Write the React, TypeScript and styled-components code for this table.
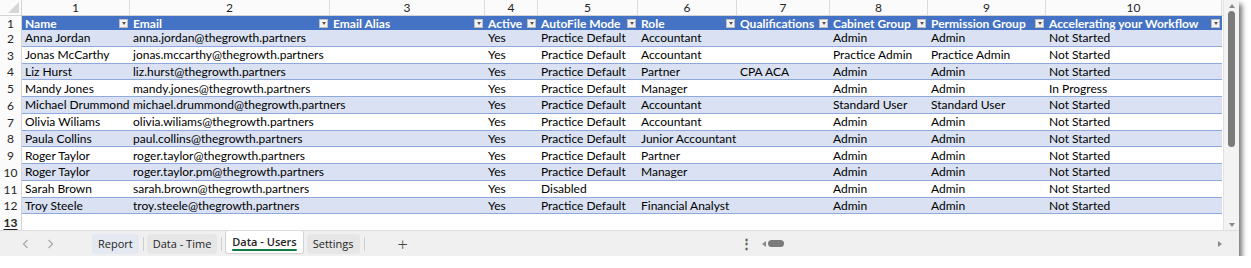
import React from 'react';
import styled, { createGlobalStyle } from 'styled-components';

const GlobalStyle = createGlobalStyle`
  html, body { margin: 0; padding: 0; background: #ffffff; }
  * { box-sizing: border-box; }
`;

const COLS = [108, 200, 155, 53, 100, 99, 93, 98, 118, 176];
const TEMPLATE = `22px ${COLS.map((c) => `${c}px`).join(' ')}`;
const ROW_H = 16.75;

const HEADERS = [
  'Name',
  'Email',
  'Email Alias',
  'Active',
  'AutoFile Mode',
  'Role',
  'Qualifications',
  'Cabinet Group',
  'Permission Group',
  'Accelerating your Workflow',
];

const PD = 'Practice Default';
const NS = 'Not Started';
const DATA: string[][] = [
  ['Anna Jordan', 'anna.jordan@thegrowth.partners', '', 'Yes', PD, 'Accountant', '', 'Admin', 'Admin', NS],
  ['Jonas McCarthy', 'jonas.mccarthy@thegrowth.partners', '', 'Yes', PD, 'Accountant', '', 'Practice Admin', 'Practice Admin', NS],
  ['Liz Hurst', 'liz.hurst@thegrowth.partners', '', 'Yes', PD, 'Partner', 'CPA ACA', 'Admin', 'Admin', NS],
  ['Mandy Jones', 'mandy.jones@thegrowth.partners', '', 'Yes', PD, 'Manager', '', 'Admin', 'Admin', 'In Progress'],
  ['Michael Drummond', 'michael.drummond@thegrowth.partners', '', 'Yes', PD, 'Accountant', '', 'Standard User', 'Standard User', NS],
  ['Olivia Wiliams', 'olivia.wiliams@thegrowth.partners', '', 'Yes', PD, 'Accountant', '', 'Admin', 'Admin', NS],
  ['Paula Collins', 'paul.collins@thegrowth.partners', '', 'Yes', PD, 'Junior Accountant', '', 'Admin', 'Admin', NS],
  ['Roger Taylor', 'roger.taylor@thegrowth.partners', '', 'Yes', PD, 'Partner', '', 'Admin', 'Admin', NS],
  ['Roger Taylor', 'roger.taylor.pm@thegrowth.partners', '', 'Yes', PD, 'Manager', '', 'Admin', 'Admin', NS],
  ['Sarah Brown', 'sarah.brown@thegrowth.partners', '', 'Yes', 'Disabled', '', '', 'Admin', 'Admin', NS],
  ['Troy Steele', 'troy.steele@thegrowth.partners', '', 'Yes', PD, 'Financial Analyst', '', 'Admin', 'Admin', NS],
];

const CELL_FONT = `'Lato', 'Liberation Sans', sans-serif`;
const UI_FONT = `'Open Sans', 'Noto Sans', sans-serif`;

const Window = styled.div`
  width: 1239px;
  height: 256px;
  display: flex;
  flex-direction: column;
  background: #ffffff;
  box-shadow: 3px 4px 5px rgba(0, 0, 0, 0.55);
  overflow: hidden;
`;

const Main = styled.div`
  height: 230px;
  display: flex;
`;

const Sheet = styled.div`
  flex: 1;
  overflow: hidden;
  font-family: ${CELL_FONT};
`;

const ColHeadRow = styled.div`
  display: grid;
  grid-template-columns: ${TEMPLATE};
  height: 16px;
  border-bottom: 1px solid #d4d4d4;
  background: #fbfbfb;
`;

const Corner = styled.div`
  position: relative;
  border-right: 1px solid #d4d4d4;
  &::after {
    content: '';
    position: absolute;
    right: 2px;
    bottom: 2px;
    width: 0;
    height: 0;
    border-left: 11px solid transparent;
    border-bottom: 11px solid #d6d6d6;
  }
`;

const ColNum = styled.div`
  border-right: 1px solid #dcdcdc;
  text-align: center;
  font-size: 12px;
  line-height: 15px;
  color: #262626;
`;

const Row = styled.div<{ $h?: number }>`
  display: grid;
  grid-template-columns: ${TEMPLATE};
  height: ${(p) => p.$h ?? ROW_H}px;
`;

const RowNum = styled.div<{ $active?: boolean }>`
  border-right: 1px solid #d4d4d4;
  background: #fbfbfb;
  display: flex;
  align-items: center;
  justify-content: center;
  font-size: 12px;
  color: #262626;
  font-weight: ${(p) => (p.$active ? 700 : 400)};
  text-decoration: ${(p) => (p.$active ? 'underline' : 'none')};
  text-underline-offset: 2px;
`;

const Cell = styled.div<{ $band?: boolean; $table?: boolean; $spill?: boolean }>`
  position: relative;
  z-index: ${(p) => (p.$spill ? 1 : 0)};
  padding-left: 3px;
  display: flex;
  align-items: center;
  background: ${(p) => (p.$band ? '#d9e1f2' : '#ffffff')};
  border-bottom: ${(p) => (p.$table ? '1px solid #8ea9db' : 'none')};
  font-size: 12px;
  color: #000000;
  white-space: nowrap;
  overflow: ${(p) => (p.$spill ? 'visible' : 'hidden')};
`;

const HeadCell = styled.div`
  display: flex;
  align-items: center;
  justify-content: space-between;
  padding: 0 2px 0 3px;
  background: #4472c4;
  color: #ffffff;
  font-weight: 700;
  font-size: 12px;
  white-space: nowrap;
  overflow: hidden;
`;

const FilterBtn = styled.span`
  flex-shrink: 0;
  width: 9px;
  height: 9px;
  background: #f3f3f3;
  border: 1px solid #bdbdbd;
  display: flex;
  align-items: center;
  justify-content: center;
  &::after {
    content: '';
    border-left: 2.5px solid transparent;
    border-right: 2.5px solid transparent;
    border-top: 3px solid #555555;
  }
`;

const VScroll = styled.div`
  width: 16px;
  background: #f3f3f3;
  border-left: 1px solid #e2e2e2;
  display: flex;
  flex-direction: column;
  align-items: center;
  padding: 4px 0 3px;
`;

const Arrow = styled.span<{ $dir: 'up' | 'down' | 'left' | 'right' }>`
  width: 0;
  height: 0;
  flex-shrink: 0;
  ${(p) =>
    p.$dir === 'up'
      ? 'border-left: 3px solid transparent; border-right: 3px solid transparent; border-bottom: 4px solid #8a8a8a;'
      : p.$dir === 'down'
      ? 'border-left: 3px solid transparent; border-right: 3px solid transparent; border-top: 4px solid #8a8a8a;'
      : p.$dir === 'left'
      ? 'border-top: 3px solid transparent; border-bottom: 3px solid transparent; border-right: 4px solid #8a8a8a;'
      : 'border-top: 3px solid transparent; border-bottom: 3px solid transparent; border-left: 4px solid #8a8a8a;'}
`;

const VThumb = styled.div`
  margin-top: 3px;
  width: 7px;
  height: 136px;
  border-radius: 4px;
  background: #7b7b7b;
`;

const VSpacer = styled.div`
  flex: 1;
`;

const TabBar = styled.div`
  height: 26px;
  display: flex;
  align-items: center;
  background: #f0f0f0;
  border-top: 1px solid #dedede;
  font-family: ${UI_FONT};
`;

const NavArea = styled.div`
  width: 92px;
  flex-shrink: 0;
  display: flex;
  align-items: center;
  padding-left: 22px;
  gap: 18px;
`;

const Chevron = styled.svg`
  width: 7px;
  height: 10px;
  fill: none;
  stroke: #a8a8a8;
  stroke-width: 1.2;
`;

const Tabs = styled.div`
  width: 646px;
  flex-shrink: 0;
  display: flex;
  align-items: center;
  height: 100%;
`;

const Tab = styled.div<{ $active?: boolean; $hover?: boolean }>`
  position: relative;
  height: ${(p) => (p.$active ? 23 : 20)}px;
  margin-top: ${(p) => (p.$active ? -3 : 0)}px;
  padding: 0 6px;
  display: flex;
  align-items: center;
  font-size: 11px;
  color: #242424;
  font-weight: ${(p) => (p.$active ? 600 : 400)};
  border-radius: 3px;
  background: ${(p) => (p.$active ? '#ffffff' : p.$hover ? '#e4e9f1' : '#e6e6e6')};
  border: ${(p) => (p.$active ? '1px solid #d2d2d2' : 'none')};
  border-top: none;
  white-space: nowrap;
`;

const TabUnderline = styled.span`
  position: absolute;
  left: 6px;
  right: 6px;
  bottom: 2px;
  height: 2px;
  border-radius: 1px;
  background: #107c41;
`;

const TabSep = styled.span<{ $hidden?: boolean }>`
  width: 1px;
  height: 14px;
  margin: ${(p) => (p.$hidden ? '0 1px' : '0 3px 0 4px')};
  background: ${(p) => (p.$hidden ? 'transparent' : '#cfcfcf')};
`;

const AddTab = styled.span`
  margin-left: 30px;
  font-size: 18px;
  font-weight: 300;
  color: #444444;
  line-height: 1;
`;

const Dots = styled.span`
  width: 16px;
  flex-shrink: 0;
  text-align: center;
  font-size: 13px;
  font-weight: 700;
  color: #555555;
  line-height: 1;
`;

const HScroll = styled.div`
  flex: 1;
  display: flex;
  align-items: center;
  padding: 0 17px 0 8px;
`;

const HThumb = styled.div`
  margin-left: 2px;
  width: 16px;
  height: 7px;
  border-radius: 4px;
  background: #7b7b7b;
`;

const HTrack = styled.div`
  flex: 1;
`;

export default function App() {
  return (
    <>
      <GlobalStyle />
      <Window>
        <Main>
          <Sheet>
            <ColHeadRow>
              <Corner />
              {COLS.map((_, i) => (
                <ColNum key={i}>{i + 1}</ColNum>
              ))}
            </ColHeadRow>
            <Row $h={14}>
              <RowNum>1</RowNum>
              {HEADERS.map((h) => (
                <HeadCell key={h}>
                  <span>{h}</span>
                  <FilterBtn />
                </HeadCell>
              ))}
            </Row>
            {DATA.map((r, ri) => (
              <Row key={ri}>
                <RowNum>{ri + 2}</RowNum>
                {r.map((v, ci) => (
                  <Cell
                    key={ci}
                    $table
                    $band={ri % 2 === 0}
                    $spill={v !== '' && ci + 1 < r.length && r[ci + 1] === ''}
                  >
                    {v}
                  </Cell>
                ))}
              </Row>
            ))}
            <Row>
              <RowNum $active>13</RowNum>
              {COLS.map((_, ci) => (
                <Cell key={ci} />
              ))}
            </Row>
            <Row>
              <RowNum>14</RowNum>
              {COLS.map((_, ci) => (
                <Cell key={ci} />
              ))}
            </Row>
          </Sheet>
          <VScroll>
            <Arrow $dir="up" />
            <VThumb />
            <VSpacer />
            <Arrow $dir="down" />
          </VScroll>
        </Main>
        <TabBar>
          <NavArea>
            <Chevron viewBox="0 0 7 10">
              <polyline points="5.5,1 1.5,5 5.5,9" />
            </Chevron>
            <Chevron viewBox="0 0 7 10">
              <polyline points="1.5,1 5.5,5 1.5,9" />
            </Chevron>
          </NavArea>
          <Tabs>
            <Tab $hover>Report</Tab>
            <TabSep />
            <Tab>Data - Time</Tab>
            <TabSep />
            <Tab $active>
              Data - Users
              <TabUnderline />
            </Tab>
            <TabSep $hidden />
            <Tab>Settings</Tab>
            <TabSep />
            <AddTab>+</AddTab>
          </Tabs>
          <Dots>⋮</Dots>
          <HScroll>
            <Arrow $dir="left" />
            <HThumb />
            <HTrack />
            <Arrow $dir="right" />
          </HScroll>
        </TabBar>
      </Window>
    </>
  );
}
